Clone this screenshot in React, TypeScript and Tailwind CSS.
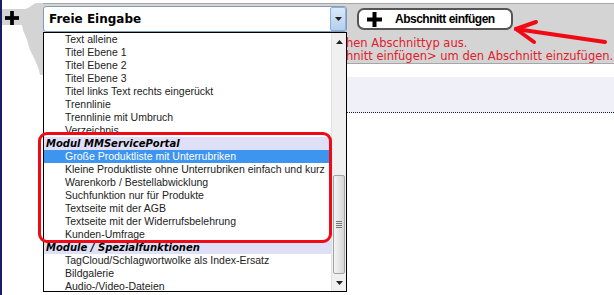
import React from "react"

const items: { label: string; kind?: "group" | "selected" }[] = [
  { label: "Text alleine" },
  { label: "Titel Ebene 1" },
  { label: "Titel Ebene 2" },
  { label: "Titel Ebene 3" },
  { label: "Titel links Text rechts eingerückt" },
  { label: "Trennlinie" },
  { label: "Trennlinie mit Umbruch" },
  { label: "Verzeichnis" },
  { label: "Modul MMServicePortal", kind: "group" },
  { label: "Große Produktliste mit Unterrubriken", kind: "selected" },
  { label: "Kleine Produktliste ohne Unterrubriken einfach und kurz" },
  { label: "Warenkorb / Bestellabwicklung" },
  { label: "Suchfunktion nur für Produkte" },
  { label: "Textseite mit der AGB" },
  { label: "Textseite mit der Widerrufsbelehrung" },
  { label: "Kunden-Umfrage" },
  { label: "Module / Spezialfunktionen", kind: "group" },
  { label: "TagCloud/Schlagwortwolke als Index-Ersatz" },
  { label: "Bildgalerie" },
  { label: "Audio-/Video-Dateien" },
]

function Plus({ className }: { className?: string }) {
  return (
    <svg viewBox="0 0 15 15" className={className}>
      <rect x="5.5" y="0" width="4" height="15" fill="#000" />
      <rect x="0" y="5.5" width="15" height="4" fill="#000" />
    </svg>
  )
}

function Triangle({ up }: { up?: boolean }) {
  return (
    <svg viewBox="0 0 7 4" className="w-[7px] h-[4px]">
      <polygon points={up ? "0,4 7,4 3.5,0" : "0,0 7,0 3.5,4"} fill="#222" />
    </svg>
  )
}

// hint line: the start sits under the open list, only the tail shows
function HintLine({ hidden, shown }: { hidden: string; shown: string }) {
  return (
    <div className="flex whitespace-nowrap">
      <span className="w-[303px] shrink-0 overflow-hidden flex justify-end">{hidden}</span>
      <span>{shown}</span>
    </div>
  )
}

function DropdownList() {
  return (
    <div className="absolute left-[41px] top-[32px] w-[304px] h-[260px] overflow-hidden border border-black bg-white flex z-10">
      <div className="flex-1 flex flex-col font-['Liberation_Sans',Arial,sans-serif] text-[10.5px] leading-[13px]">
        {items.map((it) =>
          it.kind === "group" ? (
            <div
              key={it.label}
              className="h-[13px] shrink-0 pl-[2px] bg-[#dfe0f7] font-['DejaVu_Sans',sans-serif] text-[10px] font-bold italic text-black"
            >
              {it.label}
            </div>
          ) : it.kind === "selected" ? (
            <div key={it.label} className="h-[13px] shrink-0 pl-[21px] bg-[#3d95ef] text-white">
              {it.label}
            </div>
          ) : (
            <div key={it.label} className="h-[13px] shrink-0 pl-[21px] text-[#222]">
              {it.label}
            </div>
          )
        )}
      </div>
      <div className="w-[15px] flex flex-col bg-[#f0f0f0] border-l border-[#e2e2e2]">
        <div className="h-[17px] flex items-center justify-center">
          <Triangle up />
        </div>
        <div className="flex-1" />
        <div className="h-[99px] mx-[1px] rounded-[2px] border border-[#a3a3a3] bg-gradient-to-r from-[#f4f4f4] to-[#d6d6d6] flex flex-col items-center justify-center gap-[1px]">
          <div className="w-[6px] h-px bg-[#777]" />
          <div className="w-[6px] h-px bg-[#777]" />
          <div className="w-[6px] h-px bg-[#777]" />
          <div className="w-[6px] h-px bg-[#777]" />
        </div>
        <div className="h-[17px] flex items-center justify-center">
          <Triangle />
        </div>
      </div>
    </div>
  )
}

export default function App() {
  return (
    <div className="relative w-[614px] h-[295px] overflow-hidden bg-white border-l-2 border-[#1b1b6b]">
      <div className="flex h-[61px] mt-[3px]">
        <div className="w-[41px] h-[72px] shrink-0 bg-[#d4d4d4] [clip-path:polygon(0px_6px,23px_6px,26px_5px,29px_3px,32px_1px,35px_0px,41px_0px,41px_72px,38px_72px,37px_67px,33px_57px,28px_47px,25px_37px,21px_27px,20px_22px,0px_22px)]">
          <Plus className="ml-[3px] mt-[8px] w-[14px] h-[14px]" />
        </div>
        <div className="flex-1 bg-[#d4d4d4] border-y border-[#a6a6a6]">
          <div className="flex items-start mt-[2px]">
            <div className="w-[304px] h-[26px] bg-white border border-[#7f9db9] rounded-[3px] flex items-center">
              <span className="flex-1 pl-[5px] font-['DejaVu_Sans',sans-serif] text-[12px] font-bold text-black">
                Freie Eingabe
              </span>
              <div className="w-[16px] h-[24px] rounded-[2px] border border-[#8fb0d8] bg-gradient-to-b from-[#dbe9f8] to-[#b4cfee] flex items-center justify-center">
                <Triangle />
              </div>
            </div>
            <button className="ml-[10px] mt-[2px] w-[156px] h-[22px] rounded-[7px] border-2 border-[#555] bg-white flex items-center pl-[8px]">
              <Plus className="w-[15px] h-[15px]" />
              <span className="ml-[13px] font-['Liberation_Sans',Arial,sans-serif] text-[12px] font-bold tracking-[-0.5px] text-black">
                Abschnitt einfügen
              </span>
            </button>
          </div>
          <div className="mt-[5px] font-['DejaVu_Sans',Verdana,sans-serif] text-[11.5px] leading-[13px] text-[#e0202a]">
            <HintLine hidden="Bitte suchen Sie sich einen solc" shown="hen Abschnittyp aus." />
            <HintLine hidden="Klicken Sie dann auf <Absc" shown="hnitt einfügen> um den Abschnitt einzufügen." />
          </div>
        </div>
      </div>

      <div className="ml-[41px] mt-[13px] h-[36px] bg-[#eff0f8] border-b border-dotted border-[#1b1b4b]" />

      <DropdownList />

      <div className="absolute left-[36px] top-[132px] w-[294px] h-[111px] rounded-[9px] border-[3px] border-[#f00a14] z-20 pointer-events-none" />

      <svg className="absolute left-[508px] top-[14px] w-[100px] h-[34px] z-20" viewBox="0 0 100 34">
        <g stroke="#f00a14" strokeWidth="4" strokeLinecap="round" fill="none">
          <line x1="6" y1="15" x2="95" y2="28" />
          <line x1="6" y1="15" x2="26" y2="8" />
          <line x1="6" y1="15" x2="24" y2="28" />
        </g>
      </svg>
    </div>
  )
}
